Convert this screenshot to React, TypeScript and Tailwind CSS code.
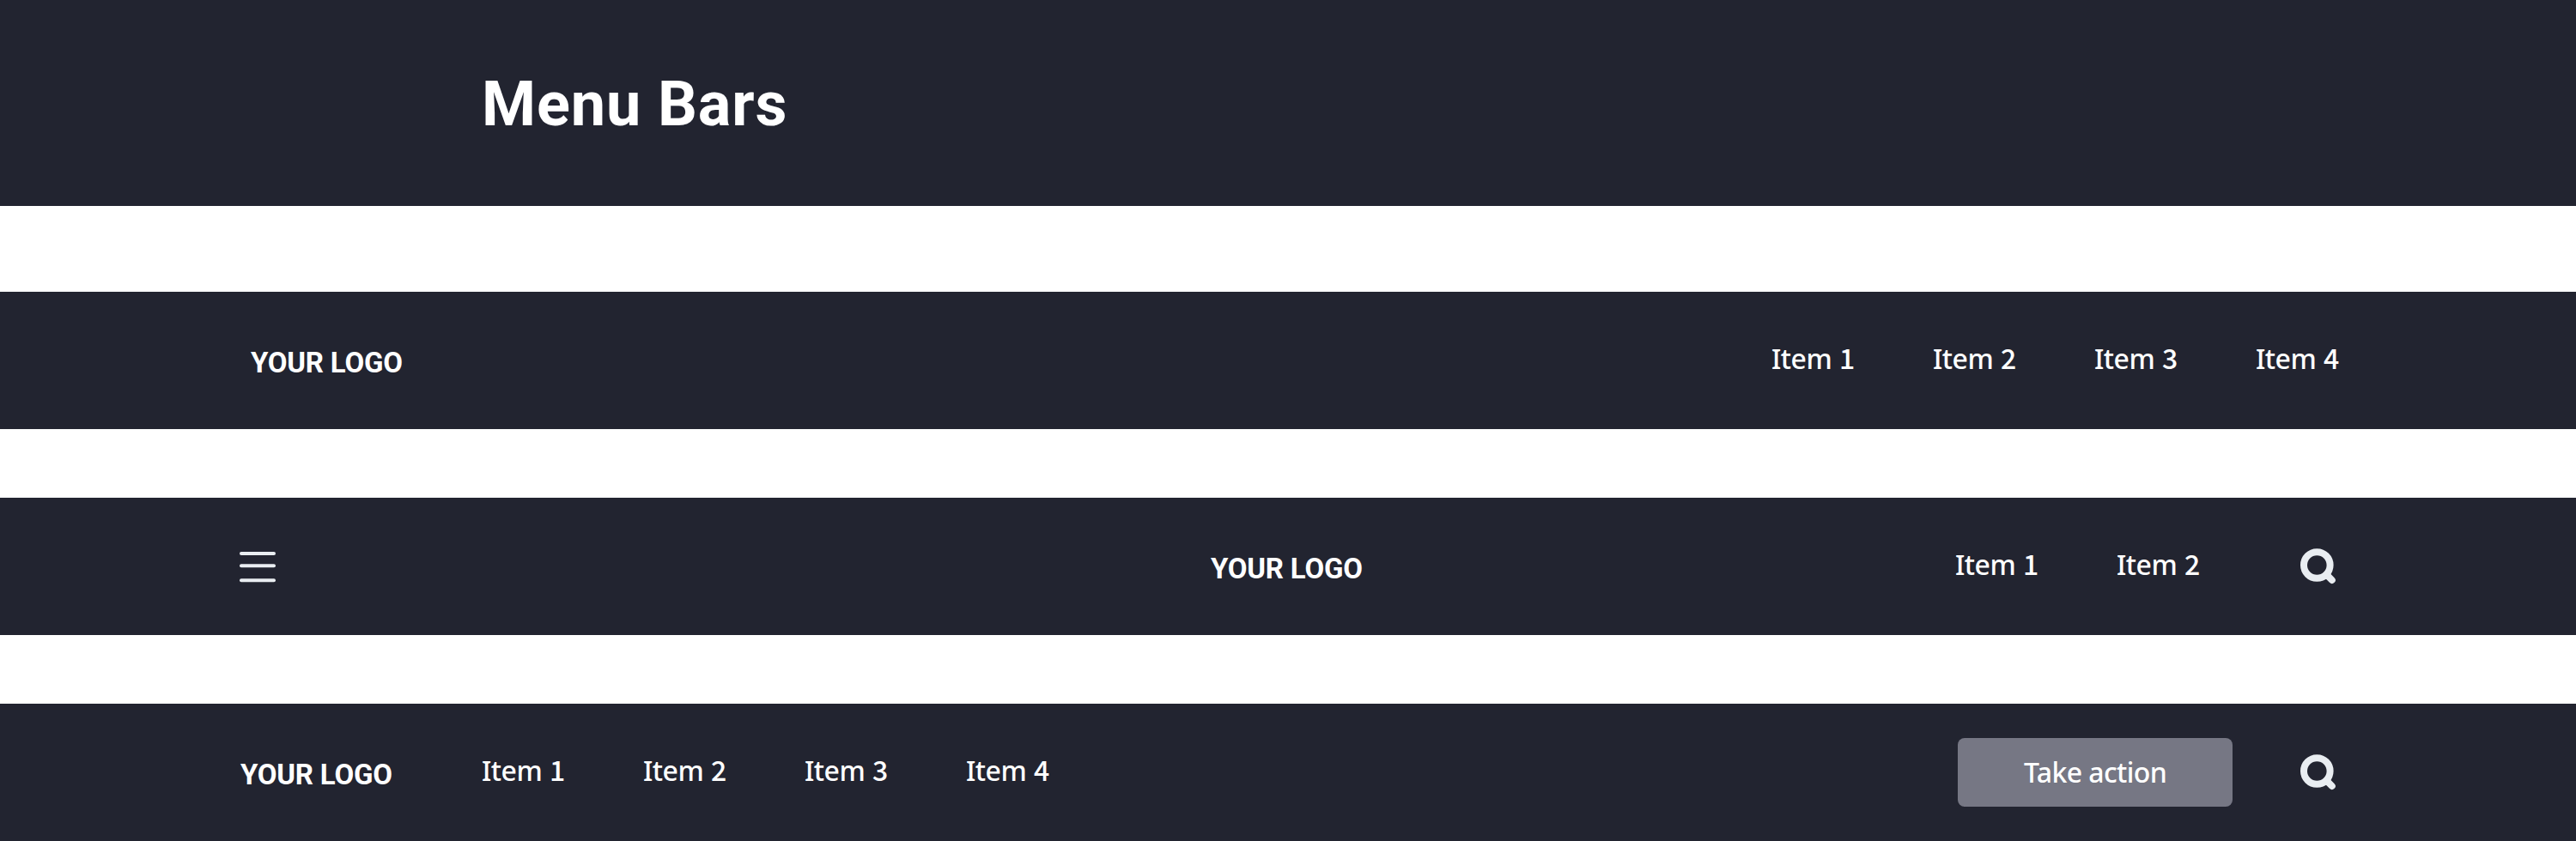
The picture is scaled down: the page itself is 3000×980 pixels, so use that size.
import React from 'react';

function SearchIcon() {
  return (
    <svg
      className="mt-[59px] shrink-0"
      width="42"
      height="42"
      viewBox="0 0 42 42"
      fill="none"
      stroke="#e9edf1"
      strokeWidth="8"
      strokeLinecap="round"
    >
      <circle cx="19.3" cy="19.5" r="15.3" />
      <path d="M31 31.2L36.8 37" />
    </svg>
  );
}

function MenuIcon() {
  return (
    <svg className="mt-[60px] shrink-0" width="42" height="42" viewBox="0 0 42 42" fill="#e9edf1">
      <rect x="0" y="3" width="42" height="4" rx="2" />
      <rect x="0" y="17.2" width="42" height="4" rx="2" />
      <rect x="0" y="34.2" width="42" height="4" rx="2" />
    </svg>
  );
}

function Logo() {
  return (
    <div className="mt-[63px] w-[176px] shrink-0 font-['Roboto',sans-serif] text-[33px] leading-10 font-bold tracking-[-0.2px] whitespace-nowrap">
      YOUR LOGO
    </div>
  );
}

function Items({ count }: { count: number }) {
  return (
    <div className="mt-[58px] flex h-10 shrink-0 gap-[88px]">
      {Array.from({ length: count }, (_, i) => (
        <a
          key={i}
          className="w-[100px] font-['Noto_Sans',sans-serif] text-[32px] leading-10 font-medium tracking-[-0.5px] whitespace-pre"
        >
          {'Item '}
          <span className="ml-px font-['Noto_Sans_CJK_SC',sans-serif] leading-none">{i + 1}</span>
        </a>
      ))}
    </div>
  );
}

function Bar({ children }: { children: React.ReactNode }) {
  return <nav className="flex h-40 items-start bg-[#222430] pr-[279px] pl-[279px]">{children}</nav>;
}

export default function App() {
  return (
    <div className="flex h-[980px] w-[3000px] flex-col overflow-hidden bg-white text-white">
      <header className="mb-[100px] h-60 shrink-0 bg-[#222430] pt-[74px] pl-[561px]">
        <h1 className="font-['Roboto',sans-serif] text-[72px] leading-[96px] font-bold tracking-[0.9px]">
          Menu Bars
        </h1>
      </header>
      <main className="flex flex-col gap-20">
        <Bar>
          <div className="ml-[13px]">
            <Logo />
          </div>
          <div className="mr-[-6px] ml-auto">
            <Items count={4} />
          </div>
        </Bar>
        <Bar>
          <MenuIcon />
          <div className="ml-[1089px]">
            <Logo />
          </div>
          <div className="mr-[114px] ml-auto">
            <Items count={2} />
          </div>
          <SearchIcon />
        </Bar>
        <Bar>
          <div className="mr-[105px] ml-px">
            <Logo />
          </div>
          <Items count={4} />
          <button className="mt-10 mr-[79px] ml-auto h-20 w-80 rounded-lg bg-[#767784] font-['Noto_Sans',sans-serif] text-[32px] leading-10 font-medium tracking-[-0.6px]">
            Take action
          </button>
          <SearchIcon />
        </Bar>
      </main>
    </div>
  );
}
